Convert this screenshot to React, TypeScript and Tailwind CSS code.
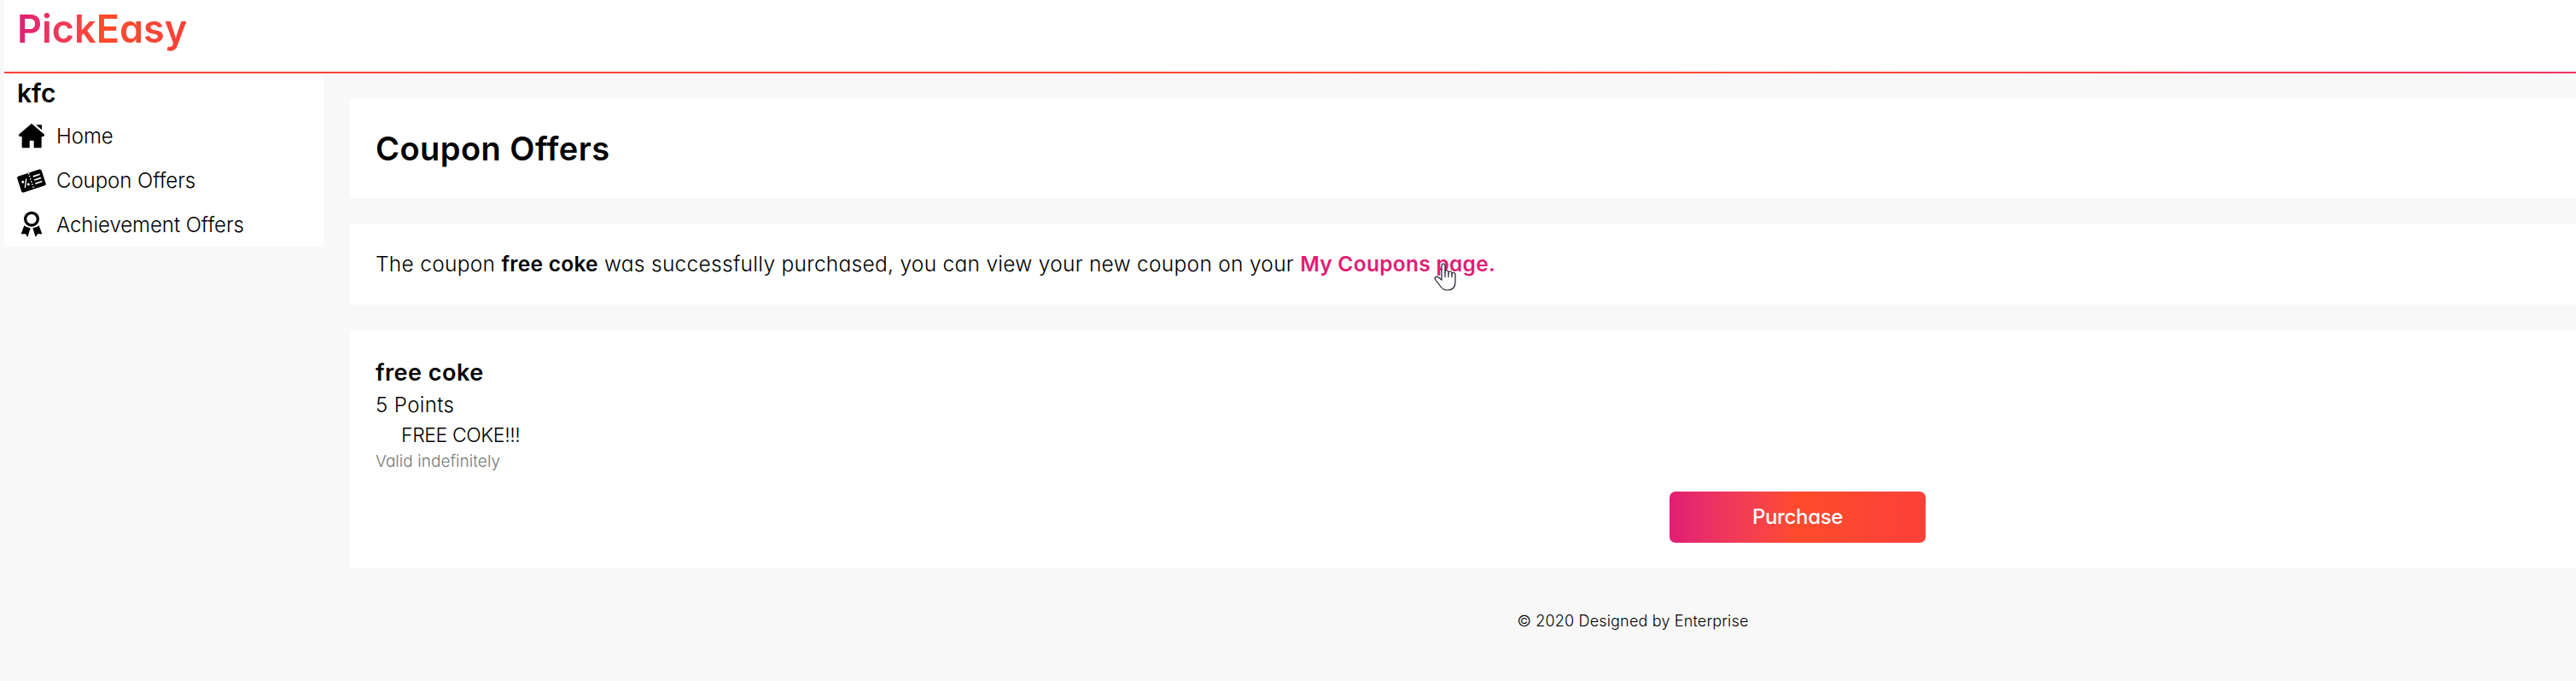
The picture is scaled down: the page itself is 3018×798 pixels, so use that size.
import React from 'react';

function HomeIcon() {
  return (
    <svg viewBox="60 36 102 96" className="h-8 w-[34px] shrink-0" fill="black">
      <path d="M111 44 L157 84 L153 90 H146 V127 Q146 130 143 130 H119 V107 Q119 104 116 104 H107 Q104 104 104 107 V130 H80 Q77 130 77 127 V90 H69 L65 84 Z" />
      <path d="M127 49 H147 V67 Z" />
    </svg>
  );
}

function CouponIcon() {
  return (
    <svg viewBox="60 189 102 102" className="h-[34px] w-[34px] shrink-0">
      <g transform="translate(111 247) rotate(-18)">
        <rect x="-45" y="-31" width="90" height="60" rx="7" fill="black" />
        <g stroke="white" fill="none">
          <path d="M-1 -31 V30" strokeWidth="4" strokeDasharray="5 5" />
          <path d="M10 -14 H35 M10 -1 H35 M10 12 H35" strokeWidth="5" />
          <path d="M-15 -14 L-29 15" strokeWidth="4" />
          <circle cx="-30" cy="-7" r="2.5" strokeWidth="4" />
          <circle cx="-14" cy="7" r="2.5" strokeWidth="4" />
        </g>
      </g>
    </svg>
  );
}

function AwardIcon() {
  return (
    <svg viewBox="60 345 102 102" className="h-[34px] w-[34px] shrink-0" fill="black">
      <circle cx="111" cy="380" r="22" fill="none" stroke="black" strokeWidth="10" />
      <path d="M85 403 Q94 411 107 412 L97 443 L89 432 L74 433 Z" />
      <path d="M137 403 Q128 411 115 412 L125 443 L133 432 L148 433 Z" />
    </svg>
  );
}

function HandCursor() {
  return (
    <svg viewBox="0 0 26 33" className="absolute left-[1270px] top-[46px] h-[33px] w-[26px]">
      <path
        d="M9 19 V3.5 Q9 1 11 1 Q13 1 13 3.5 V12 V10.5 Q13 9 15 9 Q17 9 17 11 V13 V11.5 Q17 10 19 10 Q21 10 21 12 V14 V13 Q21 11.5 23 11.5 Q25 11.5 25 14 V22 Q25 32 16 32 Q11 32 8 28 L2 20 Q0 17.500 2 16.500 Q4 15.500 6 17.500 L9 20 Z"
        fill="white"
        stroke="#1b1b2b"
        strokeWidth="1.200"
      />
      <path d="M13 11 V17 M17 12 V17 M21 13 V17" stroke="#1b1b2b" strokeWidth="1.200" />
    </svg>
  );
}

const links = [
  { label: 'Home', icon: <HomeIcon /> },
  { label: 'Coupon Offers', icon: <CouponIcon /> },
  { label: 'Achievement Offers', icon: <AwardIcon /> },
];

export default function App() {
  return (
    <div className="h-[798px] w-full overflow-hidden bg-[#f8f8f8] pl-[5px] font-['Inter',sans-serif] text-2xl font-light text-black [font-feature-settings:'cv11']">
      <div className="w-[3816px]">
        <header className="h-[84px] bg-white pl-[15px]">
          <span className="inline-block bg-linear-to-r from-[#e11d74] via-[#ff4b2b] to-[#fb4039] bg-clip-text text-[45px] leading-[67px] font-semibold text-transparent">
            PickEasy
          </span>
        </header>
        <div className="h-[2px] bg-linear-to-r from-[#fb4039] via-[#ff4b2b] to-[#e11d74]" />
        <div className="flex items-start">
          <nav className="h-[203px] w-[375px] shrink-0 bg-white pl-[15px]">
            <h2 className="text-[30px] leading-[46px] font-semibold">kfc</h2>
            {links.map((l) => (
              <a key={l.label} className="flex h-[52px] items-center gap-3">
                {l.icon}
                <span className="pt-[3px] tracking-[-0.05px]">{l.label}</span>
              </a>
            ))}
          </nav>
          <main className="ml-[30px] w-[3392px] pt-[30px]">
            <section className="flex h-[116px] items-center bg-white px-[30px]">
              <h1 className="text-[38px] leading-[56px] font-semibold tracking-[0.45px]">Coupon Offers</h1>
            </section>
            <section className="relative mt-[30px] flex h-[95px] items-center bg-white px-[30px]">
              <p className="text-[24.5px] tracking-[0.28px] whitespace-nowrap">
                The coupon <b className="font-semibold">free coke</b> was successfully purchased, you can view your new
                coupon on your <a className="font-semibold text-[#e11d74]">My Coupons page.</a>
              </p>
              <HandCursor />
            </section>
            <section className="mt-[30px] h-[279px] bg-white px-[30px] pt-[31px]">
              <h3 className="text-[27px] leading-[38px] font-semibold tracking-[0.5px]">free coke</h3>
              <p className="leading-[38px] tracking-[0.4px]">5 Points</p>
              <p className="pl-[30px] text-[23px] leading-[33px] tracking-[-0.4px]">FREE COKE!!!</p>
              <p className="text-[19px] leading-7 tracking-[0.05px] text-[#777]">Valid indefinitely</p>
              <button className="mx-auto mt-[21px] flex h-[60px] w-[300px] items-center justify-center rounded-[7px] bg-linear-to-r from-[#e11d74] via-[#ff4b2b] to-[#fb4039] font-medium tracking-[-0.35px] text-white">
                Purchase
              </button>
            </section>
          </main>
        </div>
        <footer className="mt-12 text-center text-lg leading-[27px] tracking-[0.17px]">
          © 2020 Designed by Enterprise
        </footer>
      </div>
    </div>
  );
}
